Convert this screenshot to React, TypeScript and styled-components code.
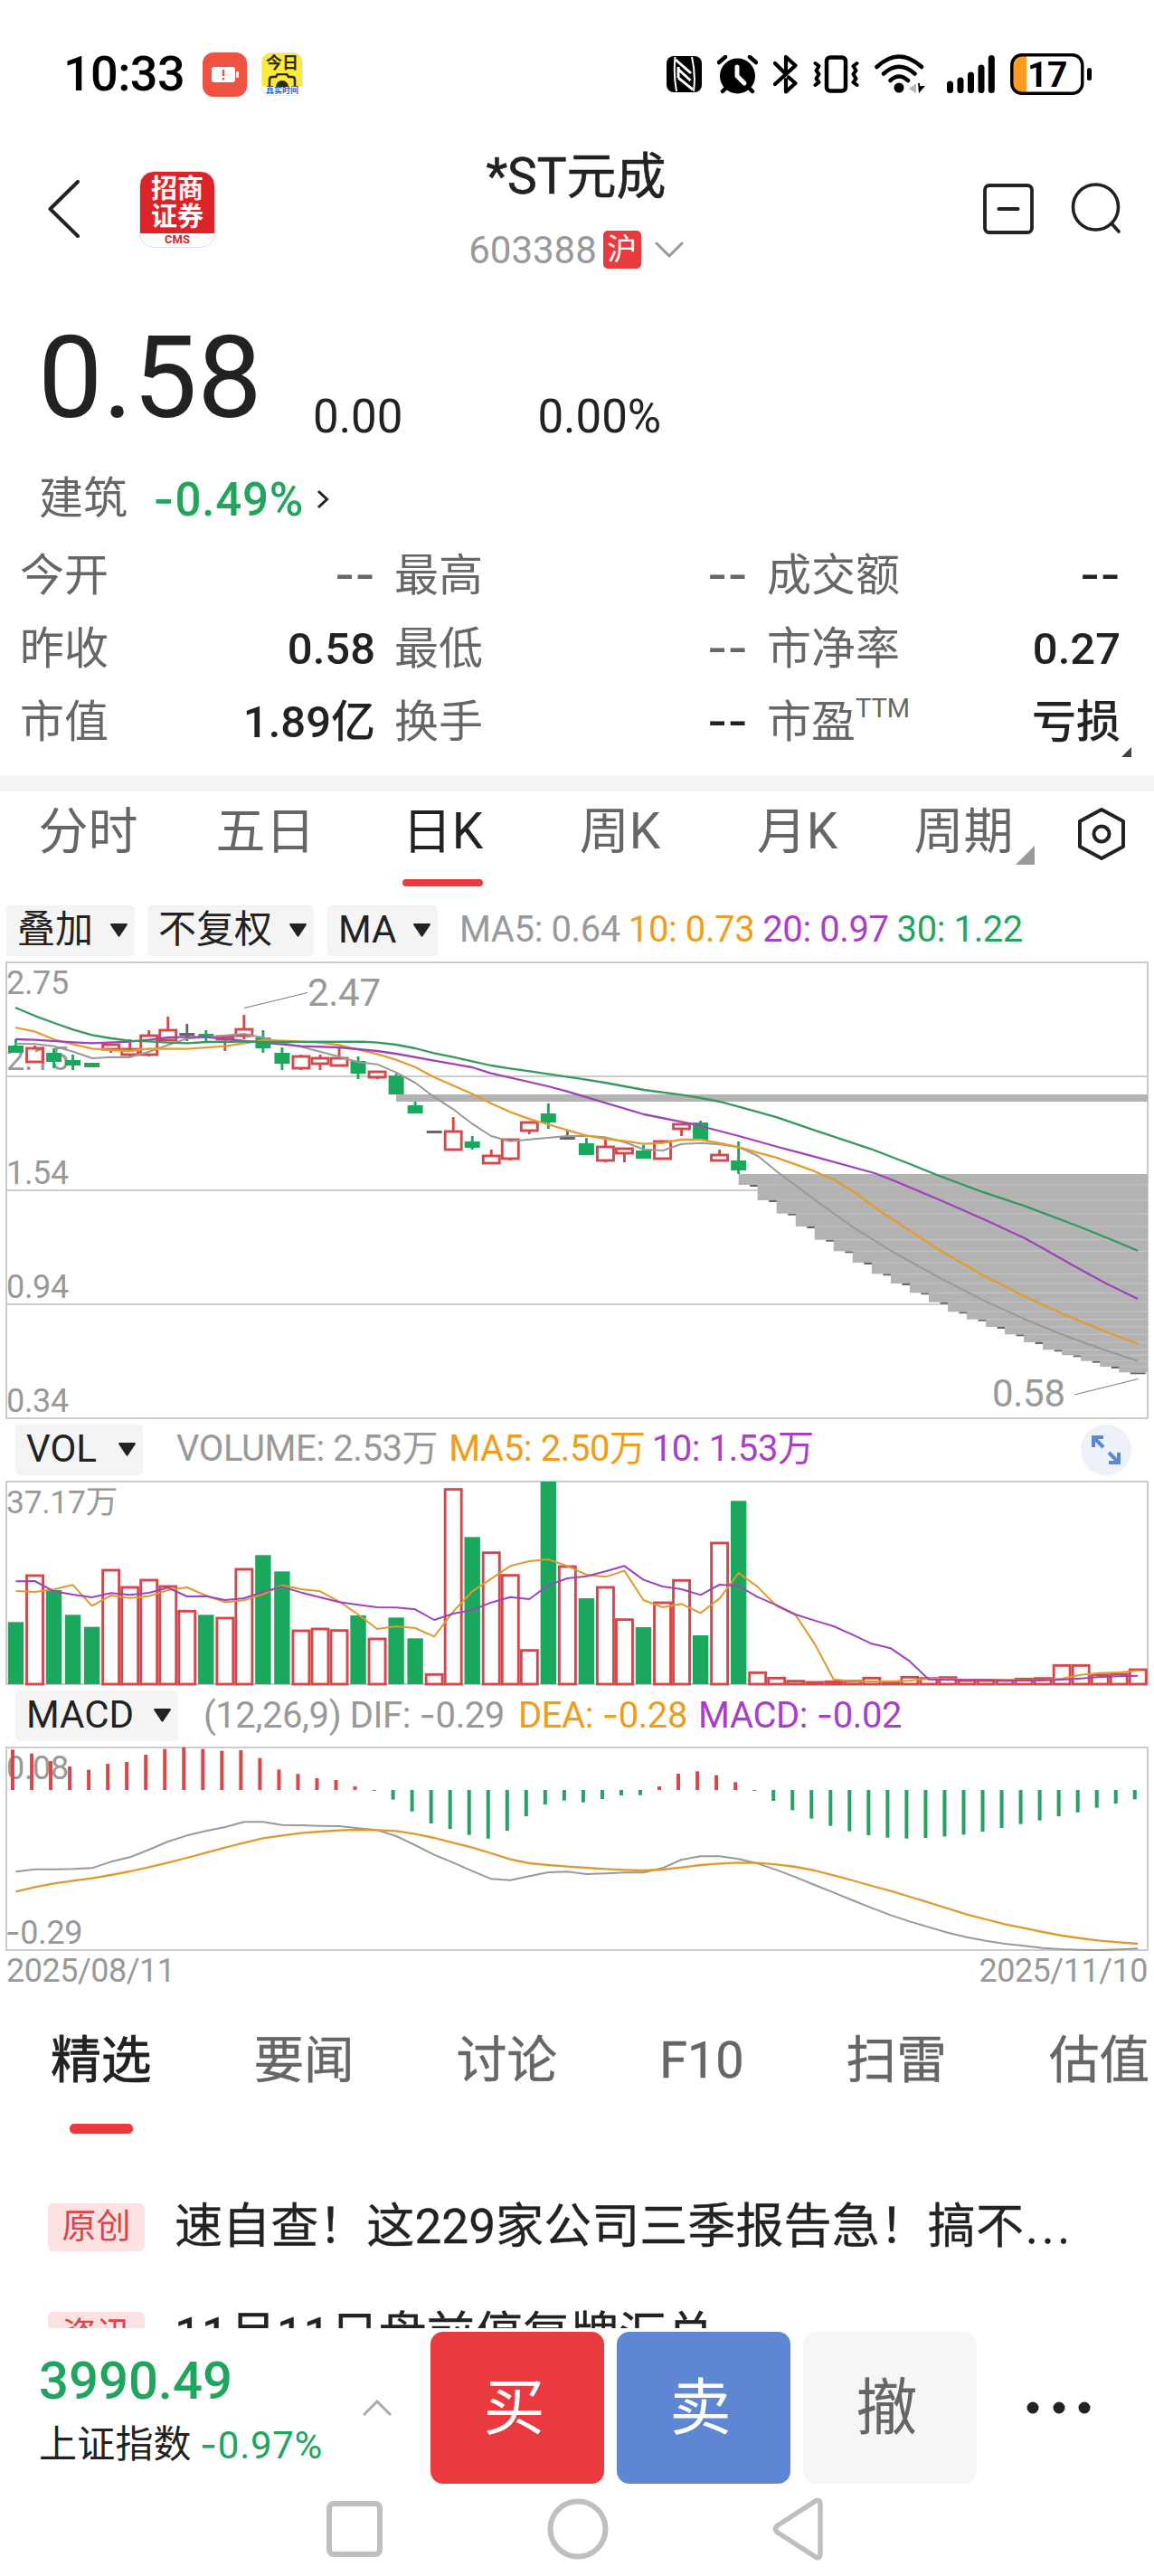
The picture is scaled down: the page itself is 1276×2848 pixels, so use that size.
import React from "react";
import styled, { createGlobalStyle } from "styled-components";

const color = {
  text: "#222222",
  label: "#666666",
  muted: "#999999",
  line: "#cccccc",
  gap: "#b3b3b3",
  red: "#e93a40",
  candleRed: "#d4474b",
  green: "#1aa85c",
  greenText: "#1fa55d",
  maGreen: "#33995f",
  orange: "#ee9d1c",
  purple: "#a93fc9",
  blue: "#5f86d3",
  chip: "#f4f4f4",
};

const GlobalStyle = createGlobalStyle`
  * {
    box-sizing: border-box;
  }
  body {
    margin: 0;
    background: #ffffff;
    color: ${color.text};
    font-family: Roboto, "Noto Sans CJK SC", sans-serif;
  }
  svg {
    display: block;
    flex: none;
  }
`;

const Screen = styled.div`
  width: 1276px;
  height: 2848px;
  overflow: hidden;
  display: flex;
  flex-direction: column;
  white-space: nowrap;
  & > * {
    flex: none;
  }
`;

/* ---------- status bar ---------- */

const StatusBar = styled.div`
  height: 160px;
  padding: 4px 68px 0 70px;
  display: flex;
  align-items: center;
`;

const Clock = styled.span`
  width: 154px;
  font-size: 54px;
  font-weight: 500;
  line-height: 60px;
  color: #000000;
  letter-spacing: -0.6px;
`;

const LowBattery = styled.div`
  width: 49px;
  height: 49px;
  border-radius: 12px;
  background: #ee5240;
  display: flex;
  align-items: center;
  justify-content: center;
`;

const CameraApp = styled.div`
  width: 46px;
  height: 48px;
  margin-left: 16px;
  border-radius: 10px;
  border: 1px solid #e8e8e0;
  background: linear-gradient(#fbea3a 78%, #ffffff 78%);
  display: flex;
  flex-direction: column;
  align-items: center;
  overflow: hidden;
  font-weight: 700;
`;

const CameraTitle = styled.span`
  font-size: 18px;
  line-height: 22px;
  color: #2b2b10;
`;

const CameraCaption = styled.span`
  font-size: 9px;
  line-height: 9px;
  color: #1e5fe0;
`;

const StatusIcons = styled.div`
  margin-left: auto;
  display: flex;
  align-items: center;
`;

const StatusIcon = styled.svg<{ $gap?: number }>`
  margin-left: ${({ $gap }) => $gap ?? 16}px;
`;

/* ---------- header ---------- */

const Header = styled.header`
  height: 142px;
  padding: 0 37px 0 52px;
  display: grid;
  grid-template-columns: 102px 333px 300px 1fr 56px 96px;
  align-items: center;
`;

const BrokerLogo = styled.div`
  width: 84px;
  height: 85px;
  border-radius: 16px;
  border: 1px solid #e4dede;
  background: linear-gradient(#dc2327 82%, #ffffff 82%);
  display: flex;
  flex-direction: column;
  align-items: center;
  color: #ffffff;
  font-size: 29px;
  font-weight: 700;
  line-height: 31px;
  padding-top: 4px;
  overflow: hidden;
`;

const LogoCaption = styled.span`
  font-size: 13px;
  line-height: 17px;
  font-weight: 700;
  color: #cf2a2c;
`;

const TitleBlock = styled.div`
  display: flex;
  flex-direction: column;
  align-items: center;
  height: 142px;
`;

const Title = styled.h1`
  margin: 0;
  font-size: 55px;
  font-weight: 400;
  line-height: 71px;
  -webkit-text-stroke: 0.6px ${color.text};
`;

const Code = styled.div`
  height: 46px;
  margin-top: 22px;
  display: flex;
  align-items: center;
  font-size: 42px;
  color: ${color.muted};
`;

const Exchange = styled.span`
  width: 42px;
  height: 42px;
  margin: 0 15px 0 7px;
  border-radius: 5px;
  background: ${color.red};
  color: #ffffff;
  font-size: 33px;
  line-height: 41px;
  text-align: center;
`;

/* ---------- quote ---------- */

const PriceRow = styled.div`
  height: 189px;
  padding: 51px 0 0 42px;
  display: flex;
`;

const Price = styled.span`
  width: 247px;
  font-size: 127px;
  line-height: 130px;
`;

const Change = styled.span<{ $left: number }>`
  margin-left: ${({ $left }) => $left}px;
  align-self: flex-end;
  font-size: 51px;
  line-height: 60px;
`;

const SectorRow = styled.div`
  height: 60px;
  margin-top: 31px;
  padding-left: 43px;
  display: flex;
  align-items: center;
  font-size: 49px;
  line-height: 60px;
  color: ${color.label};
`;

const SectorChange = styled.span`
  margin: 0 14px 0 28px;
  font-size: 51px;
  font-weight: 500;
  letter-spacing: 0.8px;
  color: ${color.greenText};
`;

const Dash = styled.span`
  font-family: Inter, sans-serif;
`;

const Stats = styled.div`
  position: relative;
  margin-top: 14px;
  padding: 0 37px 0 22px;
  display: grid;
  grid-template-columns: 393px 391px 391px;
  grid-auto-rows: 81px;
  column-gap: 21px;
`;

const Stat = styled.div`
  display: flex;
  align-items: center;
  justify-content: space-between;
  font-size: 49px;
  line-height: 60px;
  color: ${color.label};
  sup {
    font-size: 29px;
    line-height: 0;
    vertical-align: 22px;
  }
`;

const StatValue = styled.span<{ $dim?: boolean }>`
  font-size: 49px;
  font-weight: 500;
  color: ${({ $dim }) => ($dim ? color.label : color.text)};
`;

const Corner = styled.i<{ $size: number; $right: number; $bottom: number; $color: string }>`
  position: absolute;
  right: ${({ $right }) => $right}px;
  bottom: ${({ $bottom }) => $bottom}px;
  width: ${({ $size }) => $size}px;
  height: ${({ $size }) => $size}px;
  background: ${({ $color }) => $color};
  clip-path: polygon(100% 0, 100% 100%, 0 100%);
`;

const Divider = styled.div`
  height: 17px;
  margin-top: 19px;
  background: #f3f4f6;
`;

/* ---------- period tabs ---------- */

const PeriodTabs = styled.nav`
  height: 105px;
  display: flex;
`;

const PeriodTab = styled.div<{ $active?: boolean; $width?: number }>`
  position: relative;
  width: ${({ $width }) => $width ?? 196}px;
  height: 105px;
  padding: 2px 1px 0 0;
  text-align: center;
  font-size: 55px;
  line-height: 84px;
  color: ${({ $active }) => ($active ? color.text : color.label)};
  &::after {
    content: "";
    display: ${({ $active }) => ($active ? "block" : "none")};
    position: absolute;
    left: 53px;
    bottom: 0;
    width: 89px;
    height: 8px;
    border-radius: 4px;
    background: ${color.red};
  }
`;

const SettingsIcon = styled.svg`
  margin: 17px 0 0 39px;
`;

/* ---------- indicator bars ---------- */

const IndicatorBar = styled.div<{ $left?: number; $top?: number }>`
  height: 56px;
  margin-top: ${({ $top }) => $top ?? 0}px;
  padding: 0 25px 0 ${({ $left }) => $left ?? 17}px;
  display: flex;
  align-items: center;
`;

const Chip = styled.div<{ $width: number; $gap: number }>`
  width: ${({ $width }) => $width}px;
  height: 56px;
  margin-right: ${({ $gap }) => $gap}px;
  padding: 0 8px 2px 12px;
  border-radius: 5px;
  background: ${color.chip};
  display: flex;
  align-items: center;
  justify-content: space-between;
  font-size: 42px;
  line-height: 54px;
`;

const Legend = styled.span<{ $color: string; $gap?: number }>`
  margin-right: ${({ $gap }) => $gap ?? 9}px;
  padding-bottom: 2px;
  font-size: 40px;
  line-height: 54px;
  letter-spacing: -0.4px;
  color: ${({ $color }) => $color};
`;

const Expand = styled.div`
  width: 56px;
  height: 56px;
  margin-left: auto;
  border-radius: 50%;
  background: #ecf1fa;
  display: flex;
  align-items: center;
  justify-content: center;
`;

const ChartText = styled.text<{ $size?: number }>`
  font-size: ${({ $size }) => $size ?? 36}px;
  letter-spacing: -0.3px;
  fill: ${color.muted};
`;

const Dates = styled.div`
  height: 40px;
  padding: 0 7px 0 7px;
  display: flex;
  justify-content: space-between;
  font-size: 36px;
  line-height: 40px;
  letter-spacing: -0.5px;
  color: ${color.muted};
`;

/* ---------- news ---------- */

const NewsTabs = styled.nav`
  height: 156px;
  padding-left: 56px;
  display: flex;
  gap: 113px;
`;

const NewsTab = styled.div<{ $active?: boolean }>`
  position: relative;
  font-size: 55.7px;
  line-height: 158px;
  color: ${({ $active }) => ($active ? color.text : color.label)};
  -webkit-text-stroke: ${({ $active }) => ($active ? 0.8 : 0.4)}px currentColor;
  &::after {
    content: "";
    display: ${({ $active }) => ($active ? "block" : "none")};
    position: absolute;
    left: 21px;
    bottom: -4px;
    width: 70px;
    height: 11px;
    border-radius: 5px;
    background: ${color.red};
  }
`;

const NewsList = styled.div`
  height: 172px;
  margin-top: 47px;
  overflow: hidden;
`;

const NewsItem = styled.div`
  height: 120px;
  padding-left: 53px;
  display: flex;
  align-items: center;
`;

const Tag = styled.span`
  width: 107px;
  height: 53px;
  margin-right: 33px;
  border-radius: 6px;
  background: #fde2e3;
  color: #dd4449;
  font-size: 38px;
  line-height: 50px;
  text-align: center;
`;

const Headline = styled.span`
  font-size: 53.1px;
  line-height: 60px;
  -webkit-text-stroke: 0.3px currentColor;
`;

const More = styled.span`
  margin-left: 2px;
  letter-spacing: 3.6px;
`;

/* ---------- trade bar ---------- */

const TradeBar = styled.footer`
  height: 172px;
  padding: 4px 0 0 43px;
  display: flex;
  align-items: center;
`;

const IndexInfo = styled.div`
  width: 358px;
  color: ${color.greenText};
`;

const IndexValue = styled.div`
  padding-top: 5px;
  font-size: 58px;
  font-weight: 500;
  line-height: 60px;
`;

const IndexName = styled.div`
  margin-top: 17px;
  display: flex;
  gap: 9px;
  font-size: 42px;
  line-height: 48px;
  letter-spacing: 0.7px;
  b {
    font-size: 42px;
    font-weight: 400;
    letter-spacing: 0.2px;
    color: ${color.text};
  }
`;

const TradeButton = styled.button<{ $bg: string; $fg?: string }>`
  width: 192px;
  height: 168px;
  margin: 0 14px 0 0;
  padding: 0 7px 12px 0;
  border: 0;
  border-radius: 14px;
  background: ${({ $bg }) => $bg};
  color: ${({ $fg }) => $fg ?? "#ffffff"};
  font-family: inherit;
  font-size: 68px;
`;

const NavBar = styled.div`
  height: 102px;
  padding: 0 364px 2px 361px;
  display: flex;
  align-items: center;
  justify-content: space-between;
`;

/* ---------- chart data, vertical positions in page pixels ---------- */

const STEP = 21.03;
const centerX = (i: number) => 17.5 + STEP * i;

type Candle = [kind: "r" | "g" | "d", top: number, bottom: number, high?: number, low?: number];

const candles: Candle[] = [
  ["g", 1156, 1164, 1149], ["r", 1159, 1174, 1156], ["g", 1164, 1174, 1159, 1181],
  ["g", 1172, 1178, 1166, 1183], ["g", 1175, 1180], ["r", 1155, 1160, 1154, 1164],
  ["r", 1160, 1166, 1149, 1168], ["r", 1145, 1166, 1139, 1168], ["r", 1139, 1150, 1124],
  ["d", 1142, 1145, 1132, 1151], ["g", 1143, 1147, 1139, 1151], ["r", 1146, 1149, 1145, 1162],
  ["r", 1138, 1145, 1122, 1149], ["g", 1147, 1159, 1139, 1164], ["g", 1164, 1176, 1158, 1183],
  ["r", 1168, 1181, 1166, 1183], ["r", 1170, 1176, 1166, 1183], ["r", 1170, 1178, 1158],
  ["g", 1173, 1187, 1168, 1193], ["r", 1185, 1191, 1184, 1193], ["g", 1189, 1210, 1187],
  ["g", 1222, 1231, 1218], ["d", 1250, 1253], ["r", 1251, 1271, 1235],
  ["g", 1262, 1269, 1256, 1271], ["r", 1278, 1286, 1271, 1287], ["r", 1260, 1281, 1259, 1283],
  ["r", 1241, 1250, 1240, 1254], ["g", 1231, 1241, 1220, 1248], ["d", 1257, 1260, 1250],
  ["g", 1264, 1277, 1258], ["r", 1268, 1283, 1260, 1285], ["r", 1270, 1275, 1269, 1285],
  ["g", 1272, 1281, 1266], ["r", 1262, 1281], ["r", 1243, 1248, 1242, 1256],
  ["g", 1241, 1261, 1239], ["r", 1277, 1283, 1271], ["g", 1283, 1294, 1262, 1298],
];

// one-price limit-down days, each leaving a gap that is never filled
const limitDown = [
  1311, 1328, 1342.7, 1357, 1371.7, 1384.3, 1397, 1409.3, 1420, 1430.3, 1440.7,
  1451.3, 1459.7, 1468, 1476.3, 1485, 1493.3, 1499.3, 1505.7, 1512, 1518.3,
];

const ma5 =
  "17,1153.7 39,1154.3 60,1156.7 81,1162.7 102,1170 123,1168.7 143,1169 165,1162.7 186,1155.3 207,1148.3 228,1146.7 249,1144.7 270,1143 291,1147.3 313,1153.3 333,1157.3 354,1162.7 375,1168.3 396,1174.3 417,1176.7 438,1185.7 459,1197 480,1212.7 501,1226.3 522,1242.3 543,1256 564,1261.7 627,1256 648,1255.7 669,1257.3 691,1263 712,1270.7 733,1272 753,1265 775,1263.7 796,1265.3 817,1268.3 838,1278 860,1296 900,1325.7 943,1356.7 987,1384 1040,1413.3 1087,1437.3 1133,1458.3 1173,1475 1217,1491 1258,1504.7";
const ma10 =
  "17,1136 39,1140.7 60,1149.3 81,1154.7 102,1159.3 123,1161 143,1162 165,1159.3 207,1159.7 249,1156.7 270,1153.3 291,1150 313,1150.7 354,1152.7 375,1155.3 417,1165.3 438,1171.7 459,1179.7 480,1191 522,1209.3 543,1220 564,1229.3 586,1237.3 606,1243 627,1249.3 648,1255.3 669,1259 691,1261.7 712,1264.7 733,1263.7 753,1260 775,1260 796,1264 817,1268.3 838,1274.3 857,1279.3 900,1294.7 923,1305 943,1316.7 973,1339 1000,1356.7 1040,1382.7 1087,1410 1133,1433.3 1173,1451.7 1217,1470 1258,1485.7";
const ma20 =
  "17,1149 39,1149.7 81,1152.3 102,1153.3 143,1151.7 165,1149.7 186,1147 207,1146.3 228,1146.7 249,1148.7 270,1151 291,1152.7 333,1156.7 375,1158 417,1162 438,1165 480,1172.7 522,1180 543,1186.7 606,1201 627,1206.7 667,1218.7 712,1232 767,1243 817,1256 860,1268 900,1278.7 967,1297 987,1304.7 1040,1327 1090,1349 1133,1369 1153,1380 1190,1401 1223,1419 1258,1436";
const ma30 =
  "17,1114 39,1123.3 60,1131 81,1138.3 102,1144.3 123,1148 143,1150.7 165,1151.3 186,1152.7 207,1153.3 228,1152 270,1151.7 291,1152 400,1151.7 417,1152.7 438,1155 459,1159 480,1164.3 501,1168.7 522,1173.3 543,1178 564,1181.3 586,1184.3 606,1187.3 648,1193.7 669,1197 712,1205 753,1210.3 775,1214 796,1218 817,1223.7 838,1229.3 860,1235.7 900,1249.3 963,1270.3 1007,1287.3 1038,1299.7 1083,1316.7 1133,1333.3 1193,1356 1227,1369.7 1258,1382.7";

// the lower charts keep their samples in thirds of a pixel from the panel top
const volY = (v: number) => 1570 + v / 3;
const macdY = (v: number) => 1860 + v / 3;

const volumes = [
  670, 516, 564, 646, 686, 498, 555, 531, 552, 634, 646, 657, 495, 448, 502, 699, 693, 698, 648, 726,
  655, 724, 844, 230, 388, 440, 515, 764, 204, 486, 591, 555, 662, 687, 606, 532, 714, 408, 268, 838,
  856, 866, 870, 868, 866, 856, 868, 853, 857, 854, 864, 864, 864, 859, 857, 814, 814, 845, 843, 828,
];
const fallingVolume = [0, 2, 3, 4, 10, 13, 14, 18, 20, 21, 24, 28, 30, 33, 36, 38];

const volMa5 = [
  567, 570, 562, 547, 616, 582, 590, 584, 564, 555, 582, 604, 598, 578, 548, 561, 568, 602, 645, 693,
  684, 690, 718, 635, 568, 526, 484, 468, 462, 484, 513, 520, 500, 597, 621, 610, 640, 592, 507, 553,
  617, 647, 742, 860, 866, 867, 867, 864, 858, 859, 861, 861, 862, 863, 863, 857, 845, 839, 837, 831,
];
const volMa10 = [
  535, 534, 568, 579, 588, 574, 580, 573, 556, 585, 584, 597, 591, 570, 553, 572, 588, 604, 613, 621,
  622, 628, 663, 642, 630, 605, 587, 594, 548, 525, 518, 502, 484, 530, 552, 561, 580, 546, 550, 587,
  614, 645, 665, 684, 712, 742, 757, 800, 860, 862, 862, 862, 864, 864, 863, 861, 857, 852, 850, 848,
];

const macd = [
  223, 236, 261, 279, 290, 270, 264, 240, 221, 216, 221, 227, 225, 251, 289, 304, 318, 324, 345, 360,
  389, 428, 468, 486, 506, 518, 492, 444, 405, 392, 398, 387, 375, 374, 345, 303, 295, 308, 331, 360,
  393, 424, 452, 476, 494, 507, 515, 518, 516, 511, 505, 495, 483, 470, 458, 444, 431, 416, 402, 388,
];
const dif = [
  628, 620, 620, 619, 616, 595, 580, 555, 528, 508, 493, 480, 463, 463, 473, 474, 476, 477, 484, 490,
  510, 540, 572, 598, 626, 652, 656, 643, 630, 628, 636, 634, 631, 631, 616, 588, 577, 577, 586, 601,
  622, 646, 672, 697, 723, 748, 772, 793, 812, 830, 845, 857, 867, 874, 881, 885, 887, 888, 886, 883,
];
const dea = [
  694, 679, 667, 658, 650, 639, 627, 613, 598, 582, 565, 548, 532, 517, 508, 500, 495, 491, 489, 490,
  493, 503, 516, 532, 548, 567, 587, 600, 606, 611, 615, 619, 622, 624, 621, 614, 606, 601, 598, 599,
  604, 612, 624, 640, 657, 675, 692, 711, 730, 750, 770, 786, 802, 815, 828, 840, 849, 857, 862, 867,
];

const toPoints = (values: number[], y: (v: number) => number) =>
  values.map((v, i) => `${centerX(i)},${y(v)}`).join(" ");

interface LineProps {
  points: string;
  stroke: string;
  width?: number;
}

const Line = ({ points, stroke, width = 2 }: LineProps) => (
  <polyline points={points} fill="none" stroke={stroke} strokeWidth={width} strokeLinejoin="round" />
);

const CandleShape = ({ candle, x }: { candle: Candle; x: number }) => {
  const [kind, top, bottom, high = top, low = bottom] = candle;
  const stroke = kind === "r" ? color.candleRed : kind === "g" ? color.green : "#666666";
  return (
    <g stroke={stroke} strokeWidth={2.9}>
      {high < top && <path d={`M${x} ${high}V${top}`} />}
      {low > bottom && <path d={`M${x} ${bottom}V${low}`} />}
      {kind === "r" ? (
        <rect x={x - 9} y={top} width={18} height={bottom - top} fill="none" />
      ) : (
        <rect x={x - 8.5} y={top} width={17} height={bottom - top} fill={stroke} stroke="none" />
      )}
    </g>
  );
};

const PriceChart = () => (
  <svg width="1276" height="518" viewBox="0 1057 1276 518">
    <rect x="7" y="1064" width="1262" height="504" fill="none" stroke={color.line} strokeWidth="2" />
    <path d="M7 1190H1269M7 1316H1269M7 1442H1269" stroke={color.line} strokeWidth="2" />
    <ChartText x="7" y="1099">2.75</ChartText>
    <ChartText x="7" y="1183">2.15</ChartText>
    <ChartText x="7" y="1309">1.54</ChartText>
    <ChartText x="7" y="1435">0.94</ChartText>
    <ChartText x="7" y="1561">0.34</ChartText>
    {limitDown.map((y, i) => (
      <rect key={y} x={centerX(39 + i) - 8.5} y={y - 1} width="17" height="2" fill="#666666" />
    ))}
    <rect x="438" y="1210" width="831" height="8" fill={color.gap} />
    {limitDown.map((y, i) => {
      const from = i === 0 ? 1298 : limitDown[i - 1] - 1;
      const x = centerX(38 + i);
      return (
        <g key={y}>
          <rect x={x} y={from} width={1269 - x} height={y - 1 - from} fill={color.gap} />
          {i > 0 && <path d={`M${x} ${from}H1269`} stroke="#c2c2c2" strokeWidth="1" />}
        </g>
      );
    })}
    {candles.map((candle, i) => (
      <CandleShape key={i} candle={candle} x={centerX(i)} />
    ))}
    <Line points={ma5} stroke={color.muted} />
    <Line points={ma10} stroke="#e59b2d" width={2.3} />
    <Line points={ma20} stroke="#9f43bd" width={2.3} />
    <Line points={ma30} stroke={color.maGreen} width={2.3} />
    <path d="M270 1114.5L340 1097.5M1188 1542L1258.5 1524.5" stroke="#777777" strokeWidth="1" />
    <ChartText $size={42} x="340" y="1112">2.47</ChartText>
    <ChartText $size={42} x="1097" y="1555">0.58</ChartText>
  </svg>
);

const VolumeChart = () => (
  <svg width="1276" height="238" viewBox="0 1631 1276 238">
    <rect x="7" y="1638" width="1262" height="224" fill="none" stroke={color.line} strokeWidth="2" />
    <ChartText x="7" y="1673" $size={35.5}>37.17万</ChartText>
    {volumes.map((v, i) => {
      const top = volY(v);
      return fallingVolume.includes(i) ? (
        <rect key={i} x={centerX(i) - 8.7} y={top} width="17.4" height={1862 - top} fill={color.green} />
      ) : (
        <rect
          key={i}
          x={centerX(i) - 9}
          y={top}
          width="18"
          height={1862 - top}
          fill="none"
          stroke={color.candleRed}
          strokeWidth="2.9"
        />
      );
    })}
    <Line points={toPoints(volMa5, volY)} stroke="#e0992f" />
    <Line points={toPoints(volMa10, volY)} stroke="#9f43bd" />
  </svg>
);

const MacdChart = () => (
  <svg width="1276" height="234" viewBox="0 1925 1276 234">
    <rect x="7" y="1932" width="1262" height="224" fill="none" stroke={color.line} strokeWidth="2" />
    <ChartText x="7" y="1967">0.08</ChartText>
    <ChartText x="6" y="2149">
      <tspan fontFamily="Inter">-</tspan>0.29
    </ChartText>
    {macd.map((v, i) => {
      const y = macdY(v);
      const rising = y < 1979;
      return (
        <rect
          key={i}
          x={centerX(i) - 5.5}
          y={rising ? y : 1979}
          width="4"
          height={Math.abs(1979 - y)}
          fill={rising ? "#d9474b" : "#27a264"}
        />
      );
    })}
    <Line points={toPoints(dif, macdY)} stroke={color.muted} />
    <Line points={toPoints(dea, macdY)} stroke="#e0992f" width={2.3} />
  </svg>
);

const Triangle = () => (
  <svg width="19" height="15" viewBox="0 0 19 15">
    <path d="M1 0H18Q19.5 0 18.5 2L10.5 14Q9.5 15.5 8.5 14L.5 2Q-.5 0 1 0Z" fill={color.text} />
  </svg>
);

const StatusBarIcons = () => (
  <StatusIcons>
    <StatusIcon $gap={0} width="39" height="40" viewBox="0 0 39 40">
      <rect width="39" height="40" rx="8" />
      <path d="M9.5 1Q7.5 20 11 39M28 1Q32.5 20 30 39" fill="none" stroke="#ffffff" strokeWidth="2" />
      <path d="M10 4L27 19M13.5 15L26.5 27M13 24L29 37M13 12V24" fill="none" stroke="#ffffff" strokeWidth="3" />
    </StatusIcon>
    <StatusIcon $gap={17} width="45" height="43" viewBox="0 0 45 43">
      <circle cx="22.5" cy="23" r="19.5" />
      <path d="M2 8L9 2M43 8L36 2M6 40L11 35M39 40L34 35" stroke="#000000" strokeWidth="4.5" strokeLinecap="round" />
      <path d="M22 13V23L30 31" fill="none" stroke="#ffffff" strokeWidth="5" strokeLinecap="round" strokeLinejoin="round" />
    </StatusIcon>
    <StatusIcon $gap={17} width="27" height="44" viewBox="0 0 27 44">
      <path d="M2 10L14 22M2 33L24.5 12.5L14 3V18M14 28V41.5L24.5 32L17 25.5" fill="none" stroke="#000000" strokeWidth="4.2" strokeLinecap="round" strokeLinejoin="round" />
    </StatusIcon>
    <StatusIcon $gap={17} width="51" height="42" viewBox="0 0 51 42">
      <rect x="15" y="2.5" width="21" height="37" rx="4" fill="none" stroke="#000000" strokeWidth="4.5" />
      <path d="M2.5 9L6.5 12L3.5 17L6.5 21L3.5 26L6.5 30L2.5 33M48.5 9L44.5 12L47.5 17L44.5 21L47.5 26L44.5 30L48.5 33" fill="none" stroke="#000000" strokeWidth="4" strokeLinecap="round" strokeLinejoin="round" />
    </StatusIcon>
    <StatusIcon $gap={17} width="57" height="44" viewBox="0 0 57 44">
      <path d="M2.5 14Q27 -9 52 14M10 21.5Q27 6 44.5 21.5M17.5 29Q27 20 37 29" fill="none" stroke="#000000" strokeWidth="4.5" strokeLinecap="round" />
      <circle cx="27" cy="37" r="5.5" />
      <path d="M46 32V43L38 38Z" fill="#b5b5b5" />
      <path d="M48 32L49 43L56 35L50 35V32Z" />
    </StatusIcon>
    <StatusIcon $gap={23} width="53" height="42" viewBox="0 0 53 42">
      <path d="M3.5 32V38.5M15 28V38.5M26.5 22V38.5M38 14V38.5M49.3 3.5V38.5" stroke="#000000" strokeWidth="7" strokeLinecap="round" />
    </StatusIcon>
    <StatusIcon $gap={17} width="91" height="46" viewBox="0 0 91 46">
      <path d="M12 3H18V43H12Q3 43 3 34V12Q3 3 12 3Z" fill="#ff9b20" />
      <rect x="1.8" y="1.8" width="78" height="42.4" rx="11" fill="none" stroke="#000000" strokeWidth="3.4" />
      <rect x="85" y="16" width="5" height="14" rx="2.5" />
      <text x="19" y="37" fontSize="39" fontWeight="700" fontFamily="Roboto" letterSpacing="-0.3">17</text>
    </StatusIcon>
  </StatusIcons>
);

interface StatItem {
  label: React.ReactNode;
  value: string;
  dim?: boolean;
}

const stats: StatItem[] = [
  { label: "今开", value: "--", dim: true },
  { label: "最高", value: "--", dim: true },
  { label: "成交额", value: "--" },
  { label: "昨收", value: "0.58" },
  { label: "最低", value: "--", dim: true },
  { label: "市净率", value: "0.27" },
  { label: "市值", value: "1.89亿" },
  { label: "换手", value: "--" },
  { label: <>市盈<sup>TTM</sup></>, value: "亏损" },
];

const news = [
  { tag: "原创", title: "速自查！这229家公司三季报告急！搞不", more: true },
  { tag: "资讯", title: "11月11日盘前停复牌汇总" },
];

const App = () => {
  return (
    <>
      <GlobalStyle />
      <Screen>
        <StatusBar>
          <Clock>10:33</Clock>
          <LowBattery>
            <svg width="30" height="17" viewBox="0 0 30 17">
              <rect width="26" height="17" rx="3" fill="#ffffff" />
              <rect x="27" y="5" width="3" height="7" rx="1" fill="#ffffff" />
              <path d="M13 3V10M13 12V14.5" stroke="#ee5240" strokeWidth="2.5" />
            </svg>
          </LowBattery>
          <CameraApp>
            <CameraTitle>今日</CameraTitle>
            <svg width="32" height="15" viewBox="0 0 32 15">
              <path d="M2 15V7Q2 4 5 4H9L11 1H21L23 4H27Q30 4 30 7V15" fill="none" stroke="#2b2b10" strokeWidth="2.5" />
              <path d="M9 15A7 7 0 0 1 23 15Z" fill="#2b2b10" />
            </svg>
            <CameraCaption>真实时间</CameraCaption>
          </CameraApp>
          <StatusBarIcons />
        </StatusBar>

        <Header>
          <svg width="36" height="64" viewBox="0 0 36 64">
            <path d="M34 2L3.5 32L34 62" fill="none" stroke={color.text} strokeWidth="4" strokeLinecap="round" strokeLinejoin="round" />
          </svg>
          <BrokerLogo>
            <span>招商</span>
            <span>证券</span>
            <LogoCaption>CMS</LogoCaption>
          </BrokerLogo>
          <TitleBlock>
            <Title>*ST元成</Title>
            <Code>
              603388
              <Exchange>沪</Exchange>
              <svg width="32" height="18" viewBox="0 0 32 18">
                <path d="M2 2L16 16L30 2" fill="none" stroke={color.muted} strokeWidth="3" strokeLinecap="round" />
              </svg>
            </Code>
          </TitleBlock>
          <span />
          <svg width="56" height="56" viewBox="0 0 56 56">
            <rect x="2" y="2" width="52" height="52" rx="5" fill="none" stroke={color.text} strokeWidth="3.8" />
            <path d="M17.5 28H38.5" stroke={color.text} strokeWidth="4" strokeLinecap="round" />
          </svg>
          <svg width="96" height="58" viewBox="0 0 96 58">
            <circle cx="68.5" cy="27" r="25" fill="none" stroke={color.text} strokeWidth="3.6" />
            <path d="M86 45L94 54" stroke={color.text} strokeWidth="3.6" strokeLinecap="round" />
          </svg>
        </Header>

        <PriceRow>
          <Price>0.58</Price>
          <Change $left={57}>0.00</Change>
          <Change $left={149}>0.00%</Change>
        </PriceRow>

        <SectorRow>
          建筑
          <SectorChange>
            <Dash>-</Dash>0.49%
          </SectorChange>
          <svg width="14" height="22" viewBox="0 0 14 22">
            <path d="M2 2L11.5 11L2 20" fill="none" stroke={color.text} strokeWidth="3" />
          </svg>
        </SectorRow>

        <Stats>
          {stats.map(({ label, value, dim }, i) => (
            <Stat key={i}>
              <span>{label}</span>
              <StatValue $dim={dim}>{value === "--" ? <Dash>{value}</Dash> : value}</StatValue>
            </Stat>
          ))}
          <Corner $size={11} $right={25} $bottom={2} $color="#444444" />
        </Stats>
        <Divider />

        <PeriodTabs>
          <PeriodTab>分时</PeriodTab>
          <PeriodTab>五日</PeriodTab>
          <PeriodTab $active>日K</PeriodTab>
          <PeriodTab>周K</PeriodTab>
          <PeriodTab>月K</PeriodTab>
          <PeriodTab $width={172}>
            周期
            <Corner $size={21} $right={8} $bottom={24} $color={color.muted} />
          </PeriodTab>
          <SettingsIcon width="54" height="60" viewBox="0 0 54 60">
            <path d="M27 3L51 16V44L27 57L3 44V16Z" fill="none" stroke={color.text} strokeWidth="4" strokeLinejoin="round" />
            <circle cx="27" cy="30" r="8.5" fill="none" stroke={color.text} strokeWidth="4" />
          </SettingsIcon>
        </PeriodTabs>

        <IndicatorBar $left={7} $top={21}>
          <Chip $width={142} $gap={14}>叠加 <Triangle /></Chip>
          <Chip $width={184} $gap={15}>不复权 <Triangle /></Chip>
          <Chip $width={122} $gap={24}>MA <Triangle /></Chip>
          <Legend $color={color.muted}>MA5: 0.64</Legend>
          <Legend $color={color.orange}>10: 0.73</Legend>
          <Legend $color={color.purple}>20: 0.97</Legend>
          <Legend $color={color.greenText}>30: 1.22</Legend>
        </IndicatorBar>
        <PriceChart />

        <IndicatorBar>
          <Chip $width={141} $gap={37}>VOL <Triangle /></Chip>
          <Legend $color={color.muted} $gap={12}>VOLUME: 2.53万</Legend>
          <Legend $color={color.orange} $gap={7}>MA5: 2.50万</Legend>
          <Legend $color={color.purple}>10: 1.53万</Legend>
          <Expand>
            <svg width="34" height="34" viewBox="0 0 34 34">
              <path d="M3 14V3H14M4 4L14 14M31 20V31H20M30 30L20 20" fill="none" stroke={color.blue} strokeWidth="4" />
            </svg>
          </Expand>
        </IndicatorBar>
        <VolumeChart />

        <IndicatorBar>
          <Chip $width={180} $gap={28}>MACD <Triangle /></Chip>
          <Legend $color={color.muted} $gap={15}>(12,26,9) DIF: <Dash>-</Dash>0.29</Legend>
          <Legend $color={color.orange} $gap={12}>DEA: <Dash>-</Dash>0.28</Legend>
          <Legend $color={color.purple}>MACD: <Dash>-</Dash>0.02</Legend>
        </IndicatorBar>
        <MacdChart />
        <Dates>
          <span>2025/08/11</span>
          <span>2025/11/10</span>
        </Dates>

        <NewsTabs>
          <NewsTab $active>精选</NewsTab>
          <NewsTab>要闻</NewsTab>
          <NewsTab>讨论</NewsTab>
          <NewsTab>F10</NewsTab>
          <NewsTab>扫雷</NewsTab>
          <NewsTab>估值</NewsTab>
        </NewsTabs>
        <NewsList>
          {news.map(({ tag, title, more }) => (
            <NewsItem key={title}>
              <Tag>{tag}</Tag>
              <Headline>
                {title}
                {more && <More>...</More>}
              </Headline>
            </NewsItem>
          ))}
        </NewsList>

        <TradeBar>
          <IndexInfo>
            <IndexValue>3990.49</IndexValue>
            <IndexName>
              <b>上证指数</b>
              <span>
                <Dash>-</Dash>0.97%
              </span>
            </IndexName>
          </IndexInfo>
          <svg width="75" height="18" viewBox="0 0 75 18">
            <path d="M1 17L16 2L31 17" fill="none" stroke="#aaaaaa" strokeWidth="3" />
          </svg>
          <TradeButton $bg={color.red}>买</TradeButton>
          <TradeButton $bg={color.blue}>卖</TradeButton>
          <TradeButton $bg="#f6f6f6" $fg={color.label}>撤</TradeButton>
          <svg width="112" height="14" viewBox="0 0 112 14">
            <circle cx="48" cy="7" r="6.5" fill={color.text} />
            <circle cx="77" cy="7" r="6.5" fill={color.text} />
            <circle cx="105" cy="7" r="6.5" fill={color.text} />
          </svg>
        </TradeBar>

        <NavBar>
          <svg width="62" height="62" viewBox="0 0 62 62">
            <rect x="3" y="3" width="56" height="56" rx="5" fill="none" stroke="#bfbfbf" strokeWidth="6" />
          </svg>
          <svg width="68" height="68" viewBox="0 0 68 68">
            <circle cx="34" cy="34" r="30.5" fill="none" stroke="#bfbfbf" strokeWidth="6" />
          </svg>
          <svg width="58" height="70" viewBox="0 0 58 70">
            <path d="M47 4.5Q53 1 53 8V62Q53 69 47 65.5L6 39Q1 35 6 31Z" fill="none" stroke="#bfbfbf" strokeWidth="5.5" strokeLinejoin="round" />
          </svg>
        </NavBar>
      </Screen>
    </>
  );
};

export default App;
